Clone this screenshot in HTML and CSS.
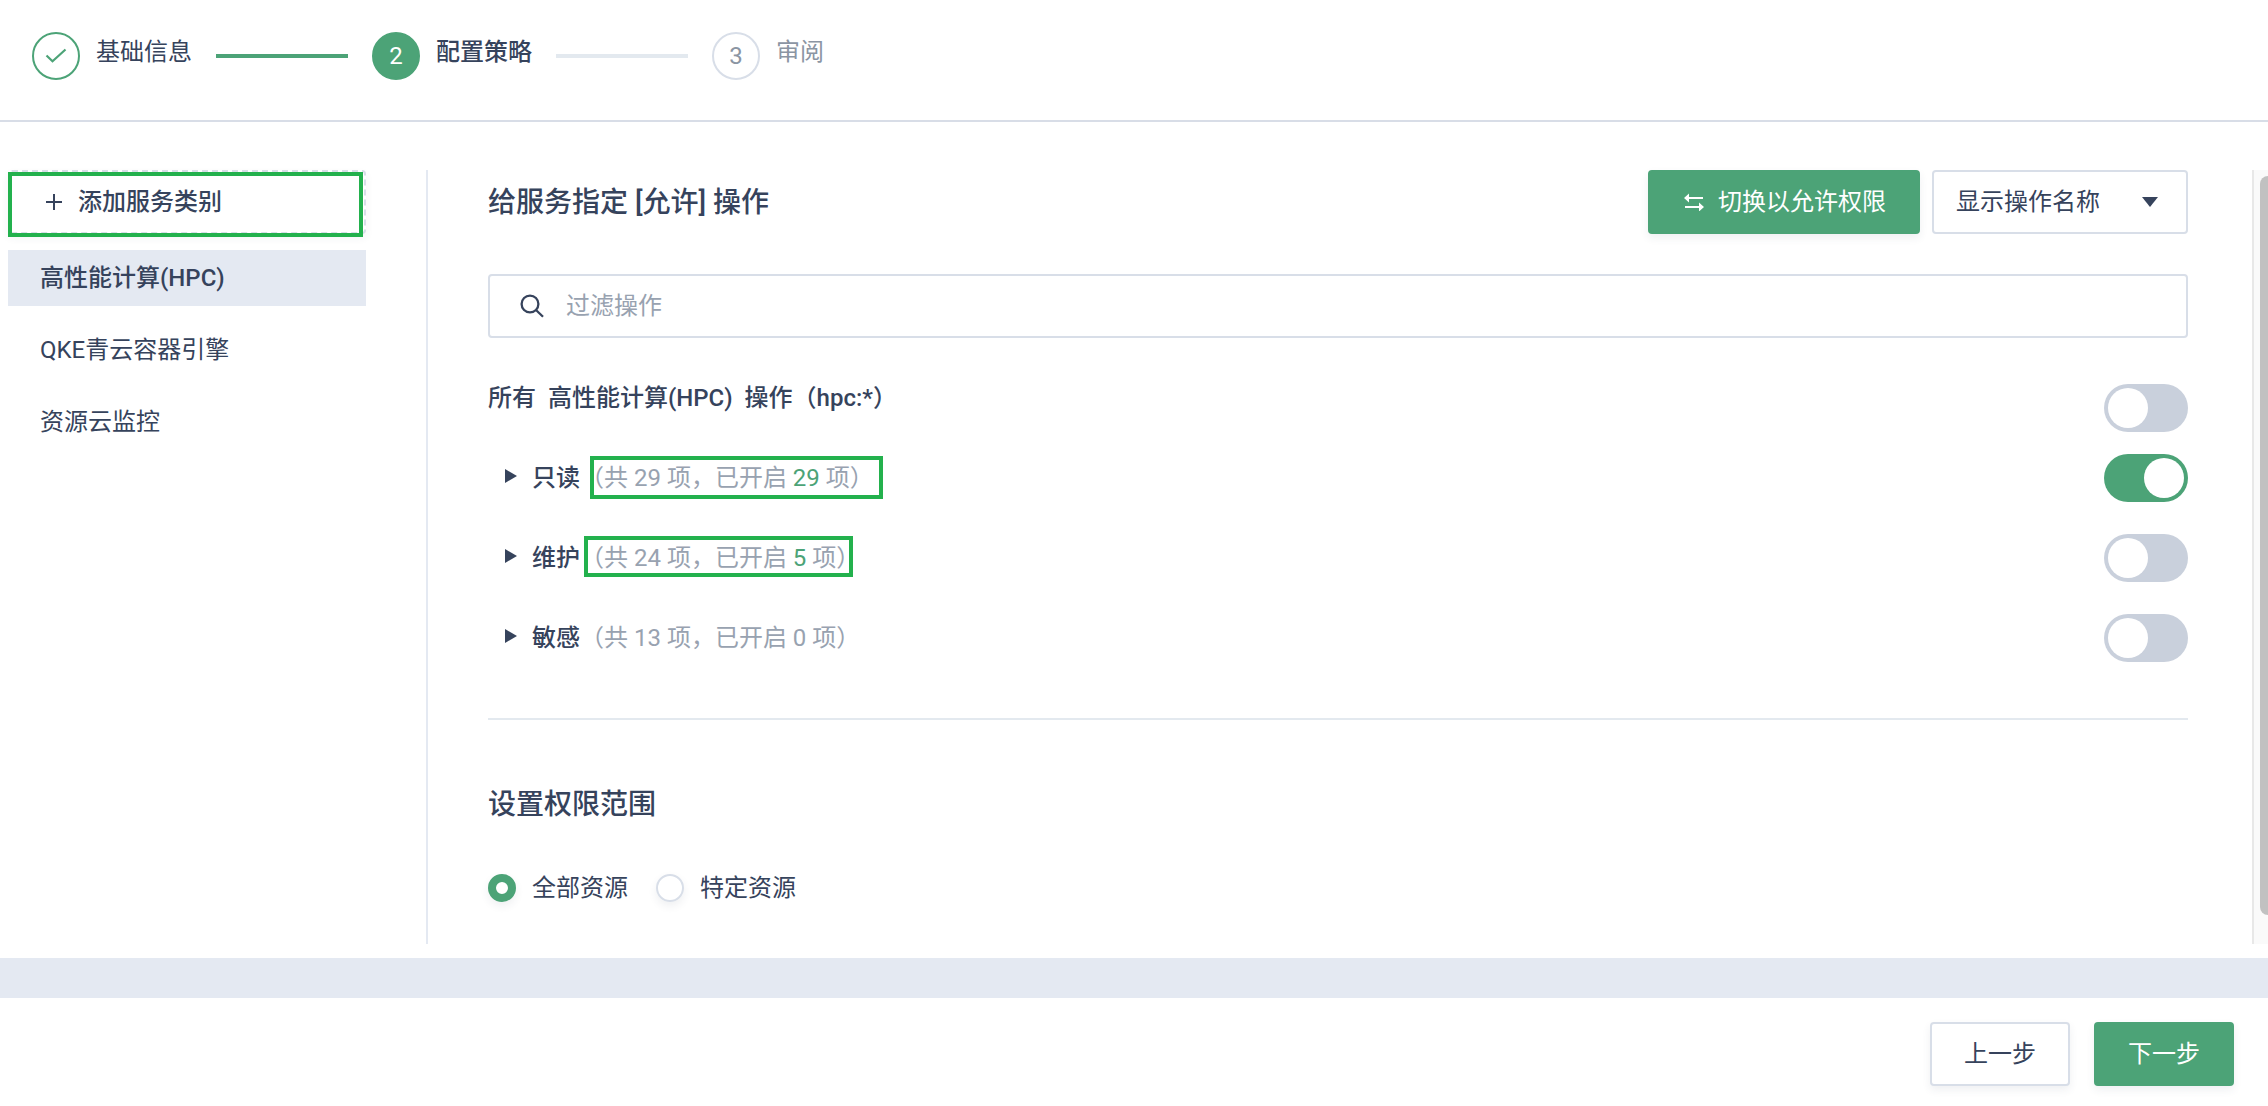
FILE: index.html
```html
<!DOCTYPE html>
<html lang="zh-CN">
<head>
<meta charset="utf-8">
<title>配置策略</title>
<link rel="stylesheet" href="styles.css">
</head>
<body>
<header class="steps">
  <div class="step">
    <span class="step-dot done"><svg width="22" height="16" viewBox="0 0 22 16"><path d="M1.5 7.5 7.5 13.2 20.5 1.5" fill="none" stroke="#4ca377" stroke-width="2.2"/></svg></span>
    <span class="step-label">基础信息</span>
  </div>
  <span class="step-line active"></span>
  <div class="step">
    <span class="step-dot current">2</span>
    <span class="step-label strong">配置策略</span>
  </div>
  <span class="step-line"></span>
  <div class="step">
    <span class="step-dot">3</span>
    <span class="step-label muted">审阅</span>
  </div>
</header>

<main class="main">
  <aside class="sidebar">
    <button class="add-service" type="button">
      <svg width="16" height="16" viewBox="0 0 16 16"><path d="M8 0V16M0 8H16" stroke="#36435c" stroke-width="2"/></svg>
      <span>添加服务类别</span>
      <i class="mark mark-add"></i>
    </button>
    <nav class="services">
      <a class="service selected">高性能计算(HPC)</a>
      <a class="service">QKE青云容器引擎</a>
      <a class="service">资源云监控</a>
    </nav>
  </aside>

  <section class="content">
    <div class="toolbar">
      <h2 class="title">给服务指定 [允许] 操作</h2>
      <button class="btn primary switch-btn" type="button">
        <svg width="20" height="18" viewBox="0 0 20 18"><path d="M0 5 5 0.5V4H19V6H5V9.5ZM20 14 15 9.5V13H1V15H15V18.5Z" fill="#fff"/></svg>
        <span>切换以允许权限</span>
      </button>
      <div class="select">
        <span>显示操作名称</span>
        <svg width="16" height="10" viewBox="0 0 16 10"><path d="M0 0H16L8 10Z" fill="#36435c"/></svg>
      </div>
    </div>

    <div class="search">
      <svg width="24" height="24" viewBox="0 0 24 24"><g fill="none" stroke="#36435c" stroke-width="2.3"><circle cx="10" cy="10" r="8.4"/><path d="M16 16 23 22.8"/></g></svg>
      <span class="placeholder">过滤操作</span>
    </div>

    <div class="all-row">
      <h3 class="all-title">所有&nbsp; 高性能计算(HPC)&nbsp; 操作（hpc:*）</h3>
      <span class="toggle"></span>
    </div>

    <div class="groups">
      <div class="group">
        <svg class="caret" width="12" height="14" viewBox="0 0 12 14"><path d="M0 0 12 7 0 14Z" fill="#36435c"/></svg>
        <p class="group-text"><b>只读</b><span class="count">（共 29 项，已开启 <em>29</em> 项）<i class="mark mark-read"></i></span></p>
        <span class="toggle on"></span>
      </div>
      <div class="group">
        <svg class="caret" width="12" height="14" viewBox="0 0 12 14"><path d="M0 0 12 7 0 14Z" fill="#36435c"/></svg>
        <p class="group-text"><b>维护</b><span class="count">（共 24 项，已开启 <em>5</em> 项）<i class="mark mark-maintain"></i></span></p>
        <span class="toggle"></span>
      </div>
      <div class="group">
        <svg class="caret" width="12" height="14" viewBox="0 0 12 14"><path d="M0 0 12 7 0 14Z" fill="#36435c"/></svg>
        <p class="group-text"><b>敏感</b><span class="count">（共 13 项，已开启 0 项）</span></p>
        <span class="toggle"></span>
      </div>
    </div>

    <div class="scope">
      <h2 class="title">设置权限范围</h2>
      <div class="radios">
        <label class="radio"><span class="radio-dot checked"></span><span class="radio-label">全部资源</span></label>
        <label class="radio"><span class="radio-dot"></span><span class="radio-label">特定资源</span></label>
      </div>
    </div>
  </section>

  <div class="scrollbar"><div class="thumb"></div></div>
</main>

<div class="band"></div>

<footer class="footer">
  <button class="btn" type="button">上一步</button>
  <button class="btn primary" type="button">下一步</button>
</footer>
</body>
</html>
```
FILE: styles.css
```css
* { box-sizing: border-box; }

body {
  margin: 0;
  height: 1106px;
  display: flex;
  flex-direction: column;
  overflow: hidden;
  background: #fff;
  color: #36435c;
  font: 400 24px/40px Roboto, "Noto Sans CJK SC", sans-serif;
}

h2, h3, p { margin: 0; }
svg { display: block; flex: none; }

.steps {
  display: flex;
  align-items: flex-start;
  gap: 24px;
  height: 122px;
  padding: 32px 32px 0;
  border-bottom: 2px solid #d8dde7;
}

.step { display: flex; gap: 16px; }

.step-dot {
  display: flex;
  align-items: center;
  justify-content: center;
  width: 48px;
  height: 48px;
  border: 2px solid #d8dee8;
  border-radius: 50%;
  color: #8b95a3;
}

.step-dot.done { border-color: #4ca377; }
.step-dot.current { border-color: #4ca377; background: #4ca377; color: #fff; }

.step-label { line-height: 41px; }
.step-label.strong { font-weight: 500; }
.step-label.muted { color: #8b95a3; }

.step-line { width: 132px; height: 4px; margin-top: 22px; background: #e3e9ef; }
.step-line.active { background: #4ca377; }

.main {
  display: flex;
  height: 836px;
  padding: 48px 0 14px 8px;
}

.sidebar { width: 358px; }

.add-service {
  position: relative;
  display: flex;
  align-items: center;
  gap: 16px;
  width: 100%;
  height: 64px;
  padding: 0 0 0 36px;
  border: 2px dashed #d8dee8;
  border-radius: 4px;
  background: #fff;
  box-shadow: 0 4px 8px rgba(54, 67, 92, .06);
  color: inherit;
  font: inherit;
  font-weight: 500;
}

.mark { position: absolute; border: 4px solid #23b14d; }
.mark-add { left: -2px; top: 0; width: 355px; height: 65px; }

.services {
  display: flex;
  flex-direction: column;
  gap: 16px;
  margin-top: 16px;
}

.service { height: 56px; padding: 8px 32px; }
.service.selected { background: #e4e9f2; font-weight: 500; }

.content {
  flex: 1;
  margin-left: 60px;
  padding: 0 64px 0 60px;
  border-left: 2px solid #e4e9f2;
}

.toolbar { display: flex; gap: 12px; height: 64px; }

.title { flex: 1; padding-top: 13px; font-size: 28px; font-weight: 500; }

.btn {
  display: flex;
  align-items: center;
  justify-content: center;
  width: 140px;
  height: 64px;
  padding: 0;
  border: 2px solid #d8dee8;
  border-radius: 4px;
  background: #fff;
  box-shadow: 0 4px 8px rgba(54, 67, 92, .08);
  color: #36435c;
  font: inherit;
}

.btn.primary { border-color: #4ca377; background: #4ca377; color: #fff; }

.switch-btn { gap: 14px; width: 272px; padding-left: 2px; }

.select {
  display: flex;
  align-items: center;
  justify-content: space-between;
  width: 256px;
  height: 64px;
  padding: 0 28px 0 22px;
  border: 2px solid #d8dee8;
  border-radius: 4px;
}

.search {
  display: flex;
  align-items: center;
  gap: 22px;
  height: 64px;
  margin-top: 40px;
  padding: 0 30px;
  border: 2px solid #d8dee8;
  border-radius: 4px;
}

.placeholder { padding-bottom: 1px; color: #98a2b0; }

.all-row {
  display: flex;
  justify-content: space-between;
  height: 48px;
  margin-top: 46px;
}

.all-title { margin-top: -6px; font-size: 24px; font-weight: 500; }

.toggle {
  flex: none;
  width: 84px;
  height: 48px;
  padding: 4px;
  border-radius: 24px;
  background: #c9d0dc;
}

.toggle::before {
  content: "";
  display: block;
  width: 40px;
  height: 40px;
  border-radius: 50%;
  background: #fff;
}

.toggle.on { background: #4ca377; }
.toggle.on::before { margin-left: auto; }

.groups {
  display: flex;
  flex-direction: column;
  gap: 32px;
  height: 266px;
  padding-top: 22px;
}

.group {
  display: flex;
  height: 48px;
  padding-left: 17px;
}

.caret { margin: 15px 15px 0 0; }

.group-text { flex: 1; padding-top: 4px; }
.group-text b { font-weight: 500; }
.count { position: relative; color: #98a2b0; }
.count em { color: #4ca377; font-style: normal; }
.mark-read { left: 10px; top: -8px; width: 293px; height: 43px; }
.mark-maintain { left: 4px; top: -8px; width: 269px; height: 41px; }

.scope {
  margin-top: 20px;
  padding-top: 65px;
  border-top: 2px solid #e3e9ef;
}

.scope .title { padding-top: 0; }

.radios { display: flex; gap: 28px; margin-top: 43px; }
.radio { display: flex; align-items: center; gap: 16px; height: 40px; }

.radio-dot {
  width: 28px;
  height: 28px;
  border: 2px solid #d8dee8;
  border-radius: 50%;
  box-shadow: 0 4px 8px rgba(54, 67, 92, .08);
}

.radio-dot.checked { border: 8px solid #4ca377; }

.scrollbar {
  width: 16px;
  height: 774px;
  padding: 6px 0 0 6px;
  border-left: 2px solid #e8e8e8;
  background: #fafafa;
}

.thumb {
  height: 739px;
  border-radius: 8px 0 0 8px;
  background: #c1c1c1;
}

.band { height: 40px; background: #e4e9f2; }

.footer {
  display: flex;
  justify-content: flex-end;
  gap: 24px;
  height: 108px;
  padding: 24px 34px 0 0;
}
```
